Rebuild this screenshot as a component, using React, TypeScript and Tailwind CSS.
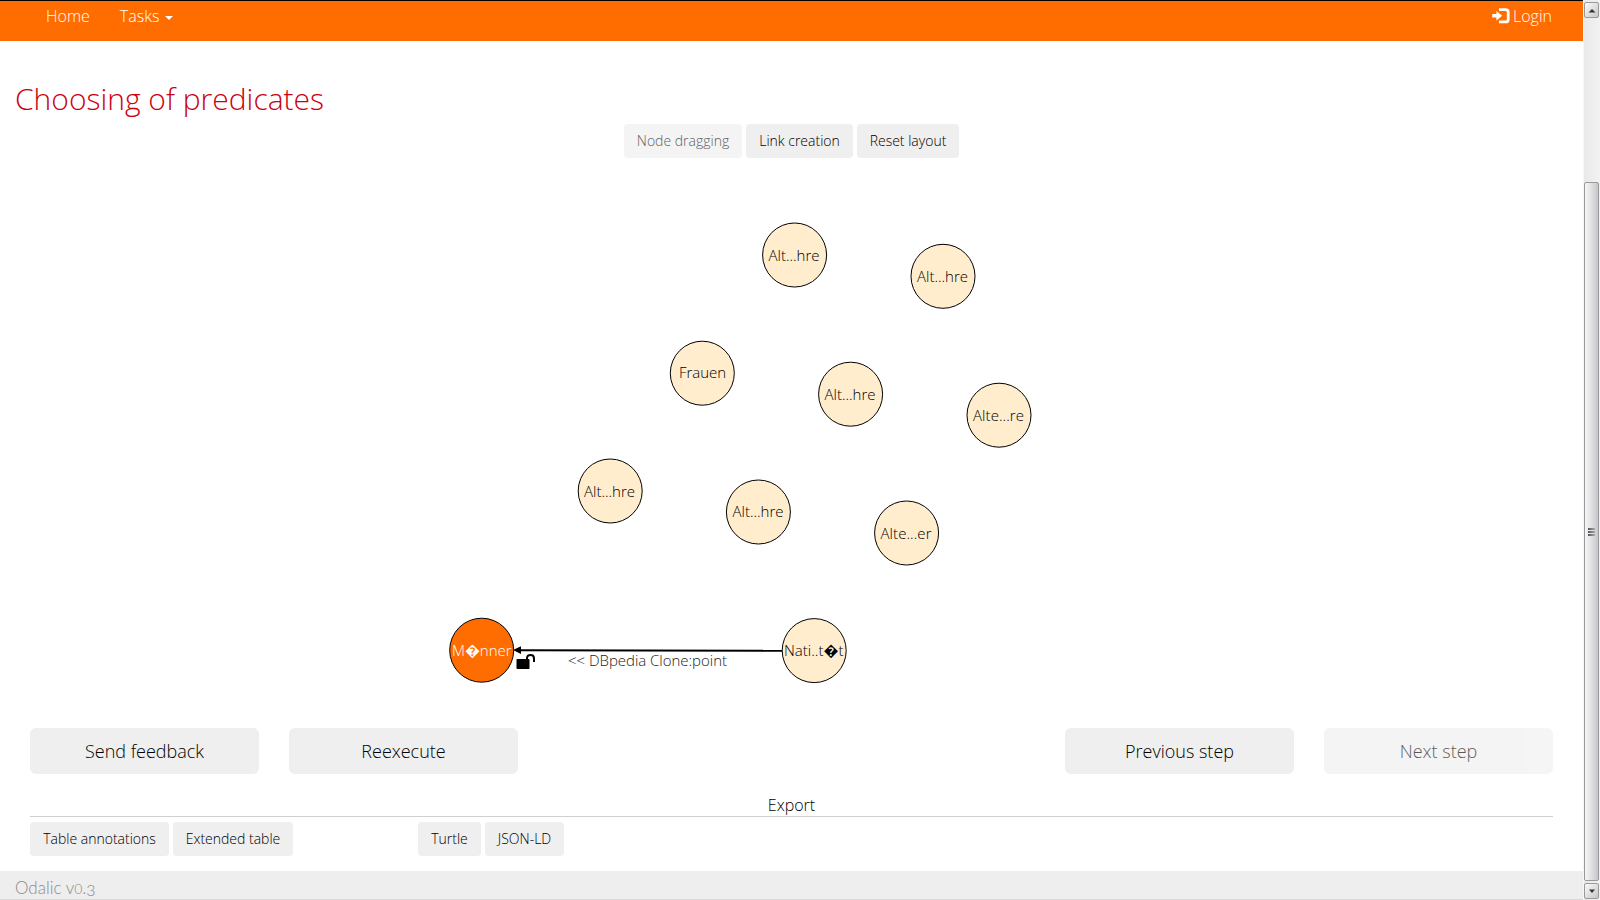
import React from "react";

type GraphNode = { x: number; y: number; label: string; tx: number; ty: number; w: number; subject?: boolean };

const nodes: GraphNode[] = [
  { x: 794.6, y: 255, label: "Alt...hre", tx: 768.5, ty: 260.5, w: 51 },
  { x: 943, y: 276.3, label: "Alt...hre", tx: 917, ty: 281.5, w: 51 },
  { x: 702.3, y: 373.2, label: "Frauen", tx: 679, ty: 378, w: 47 },
  { x: 850.6, y: 394.2, label: "Alt...hre", tx: 824.5, ty: 399.5, w: 51 },
  { x: 999, y: 415.2, label: "Alte...re", tx: 973, ty: 420.5, w: 51 },
  { x: 610.2, y: 491, label: "Alt...hre", tx: 584, ty: 496.5, w: 51 },
  { x: 758.4, y: 512, label: "Alt...hre", tx: 732.5, ty: 517, w: 51 },
  { x: 906.6, y: 533, label: "Alte...er", tx: 880.5, ty: 538.5, w: 51 },
  { x: 481.7, y: 650.2, label: "M\uFFFDnner", tx: 452, ty: 655.5, w: 59.5, subject: true },
  { x: 814.2, y: 650.6, label: "Nati..t\uFFFDt", tx: 784, ty: 656, w: 59.5 },
];

function LoginIcon() {
  return (
    <svg width="18" height="16" viewBox="0 0 18 16" className="-mt-px">
      <path d="M7 1.7H13.6Q16.2 1.7 16.2 4.2V11.4Q16.2 13.9 13.6 13.9H7" fill="none" stroke="#fff" strokeWidth="2.8" />
      <path d="M0.2 6H4.4V3L10.2 7.8L4.4 12.6V9.6H0.2Z" fill="#fff" />
    </svg>
  );
}

function SmallButton({ children, className = "" }: { children: React.ReactNode; className?: string }) {
  return (
    <button className={`h-[34px] shrink-0 whitespace-nowrap rounded bg-[#efefef] text-[14px] leading-[32px] ${className}`}>
      {children}
    </button>
  );
}

function BigButton({ children, className = "" }: { children: React.ReactNode; className?: string }) {
  return (
    <button className={`h-[46px] w-[229px] shrink-0 rounded-md bg-[#efefef] text-[18px] leading-[46px] ${className}`}>
      {children}
    </button>
  );
}

function Graph() {
  return (
    <svg width="1583" height="570" viewBox="0 158 1583 570" className="block shrink-0">
      <line x1="520" y1="650.2" x2="783" y2="650.8" stroke="#000" strokeWidth="2" />
      <path d="M513 650L521 646.3V653.9Z" />
      <text x="568" y="666" textLength="159" fontSize="15" fill="#222">{"<< DBpedia Clone:point"}</text>
      <rect x="516.5" y="659" width="13" height="10" rx="0.8" />
      <path d="M527 660V658.4Q527 655 530.6 655Q534 655 534 658.4V662" fill="none" stroke="#000" strokeWidth="2" />
      {nodes.map((n) => (
        <g key={`${n.x}-${n.y}`}>
          <circle cx={n.x} cy={n.y} r="32" fill={n.subject ? "#ff6c00" : "#ffedcd"} stroke="#000" strokeWidth="1" />
          <text x={n.tx} y={n.ty} textLength={n.w} fontSize="15" fill={n.subject ? "#fff" : "#000"}>
            {n.label}
          </text>
        </g>
      ))}
    </svg>
  );
}

function ScrollBar() {
  return (
    <div className="flex h-[900px] w-[17px] flex-col border-l border-[#f7f7f7] bg-gradient-to-r from-[#e9e9e9] to-[#f2f2f2] pt-0.5">
      <div className="flex h-4 w-[15px] shrink-0 items-center justify-center rounded-[2px] border border-[#999] bg-gradient-to-br from-[#fafafa] to-[#c8c8cc]">
        <svg width="8" height="5"><path d="M0.5 4.5L4 1L7.5 4.5Z" fill="#333" /></svg>
      </div>
      <div className="mt-[164px] flex h-[699px] w-[15px] shrink-0 items-center justify-center rounded-[2px] border border-[#999] bg-gradient-to-r from-[#f6f6f6] via-[#e0e0e2] to-[#c6c6cc]">
        <div className="flex w-[7px] flex-col gap-px">
          <div className="h-0.5 bg-gradient-to-r from-[#555] to-[#aaa]" />
          <div className="h-0.5 bg-gradient-to-r from-[#555] to-[#aaa]" />
          <div className="h-0.5 bg-gradient-to-r from-[#555] to-[#aaa]" />
        </div>
      </div>
      <div className="mt-0.5 flex h-4 w-[15px] shrink-0 items-center justify-center rounded-[2px] border border-[#999] bg-gradient-to-br from-[#fafafa] to-[#c8c8cc]">
        <svg width="8" height="5"><path d="M1 0.5L4 4L7 0.5Z" fill="#333" /></svg>
      </div>
    </div>
  );
}

export default function App() {
  return (
    <div className="flex h-[900px] w-[1600px] overflow-hidden bg-white font-['Open_Sans','DejaVu_Sans',sans-serif] font-light text-black">
      <div className="flex w-[1583px] shrink-0 flex-col">
        <header className="flex h-[41px] shrink-0 items-start justify-between border-t border-black bg-[#ff6c00] pr-[31px] pl-[46px] pt-[3px] text-[16px] leading-6 text-white">
          <nav className="flex gap-[30px]">
            <a>Home</a>
            <a className="flex items-center">
              Tasks
              <svg width="8" height="4" className="ml-1.5 mt-1"><path d="M0 0H8L4 4Z" fill="#fff" /></svg>
            </a>
          </nav>
          <a className="flex items-center gap-[3px]"><LoginIcon />Login</a>
        </header>
        <h1 className="mt-[38px] h-[45px] shrink-0 pl-[15px] text-[30px] leading-10 text-[#cc0011]">Choosing of predicates</h1>
        <div className="flex h-[34px] shrink-0 justify-center gap-1">
          <SmallButton className="w-[118px] opacity-65">Node dragging</SmallButton>
          <SmallButton className="w-[107px]">Link creation</SmallButton>
          <SmallButton className="w-[102px]">Reset layout</SmallButton>
        </div>
        <Graph />
        <div className="flex shrink-0 gap-[30px] px-[30px]">
          <BigButton>Send feedback</BigButton>
          <BigButton>Reexecute</BigButton>
          <BigButton className="ml-auto">Previous step</BigButton>
          <BigButton className="opacity-65">Next step</BigButton>
        </div>
        <div className="mx-[30px] mt-5 h-[23px] shrink-0 border-b border-[#d0d0d0] text-center text-[16px] leading-[23px]">Export</div>
        <div className="mt-[5px] flex shrink-0 gap-1 px-[30px]">
          <SmallButton className="w-[139px]">Table annotations</SmallButton>
          <SmallButton className="w-[120px]">Extended table</SmallButton>
          <SmallButton className="ml-[121px] w-[63px]">Turtle</SmallButton>
          <SmallButton className="w-[79px]">JSON-LD</SmallButton>
        </div>
        <footer className="mt-[15px] h-[29px] shrink-0 border-b border-[#d8d8d8] bg-[#eee] pl-[15px] pt-2 font-['Lato',sans-serif] text-[17px] leading-[18px] text-[#8c8c8c]">
          Odalic v<span className="text-[14px]">0</span>.<span className="relative top-[2px] text-[16px] leading-none">3</span>
        </footer>
      </div>
      <ScrollBar />
    </div>
  );
}
